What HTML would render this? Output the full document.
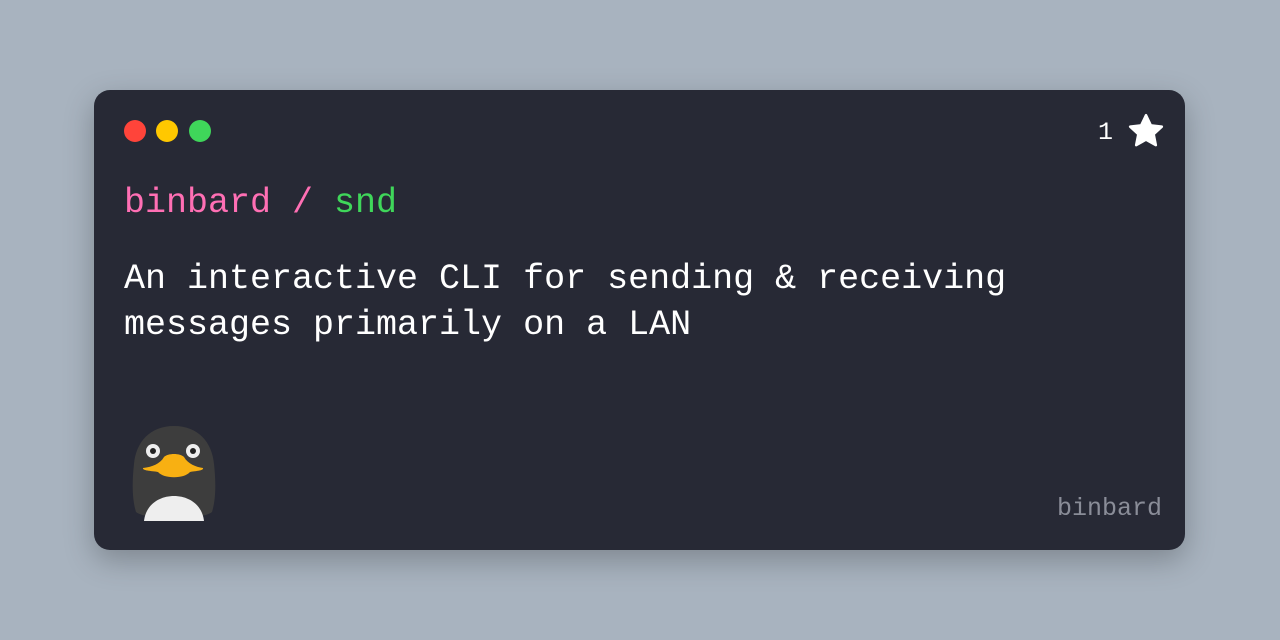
<!DOCTYPE html>
<html><head><style>
body{margin:0;width:1280px;height:640px;background:#a8b3bf;font-family:"Liberation Mono",monospace;overflow:hidden;position:relative}
.card{position:absolute;left:94px;top:90px;width:1091px;height:460px;background:#272935;border-radius:16px;box-shadow:0 10px 30px rgba(0,0,0,.25)}
.dot{position:absolute;top:120px;width:22px;height:22px;border-radius:50%}
.t{position:absolute;white-space:pre;line-height:1}
</style></head><body>
<div class="card"></div>
<div class="dot" style="left:124px;background:#ff443a"></div>
<div class="dot" style="left:156px;background:#ffc800"></div>
<div class="dot" style="left:189px;background:#3fd65a"></div>
<div class="t" style="left:1098px;top:120px;font-size:25px;color:#fff">1</div>
<svg style="position:absolute;left:1126px;top:111px" width="40" height="40" viewBox="0 0 24 24"><path d="M12 2.5l2.9 6.1 6.6.8-4.9 4.5 1.3 6.6L12 17.2l-5.9 3.3 1.3-6.6-4.9-4.5 6.6-.8z" fill="#fff" stroke="#fff" stroke-width="1.5" stroke-linejoin="round"/></svg>
<div class="t" style="left:124px;top:186px;font-size:35px;color:#ff6fb4">binbard / <span style="color:#3fd65a">snd</span></div>
<div class="t" style="left:124px;top:256px;font-size:35px;color:#fff;line-height:46px">An interactive CLI for sending &amp; receiving
messages primarily on a LAN</div>
<div class="t" style="left:1057px;top:496px;font-size:25px;color:#8a8d98">binbard</div>
<svg style="position:absolute;left:128px;top:424px" width="92" height="100" viewBox="0 0 92 100">
<path d="M46 2C22 2 8 18 6 40 4 58 4 75 8 88 20 97 72 97 84 88 88 75 88 58 86 40 84 18 70 2 46 2z" fill="#3d3d3d"/>
<path d="M16 97C18 80 32 72 46 72 60 72 74 80 76 97z" fill="#eee"/>
<circle cx="25" cy="27" r="7" fill="#eee"/><circle cx="25" cy="27" r="3" fill="#222"/>
<circle cx="65" cy="27" r="7" fill="#eee"/><circle cx="65" cy="27" r="3" fill="#222"/>
<path d="M15 44C24 43 32 40 36 33 40 29 52 29 56 33 60 40 68 43 75 44 76 47 66 47 62 48 56 55 36 55 30 48 26 47 14 47 15 44z" fill="#f8b012"/>
</svg>
</body></html>
